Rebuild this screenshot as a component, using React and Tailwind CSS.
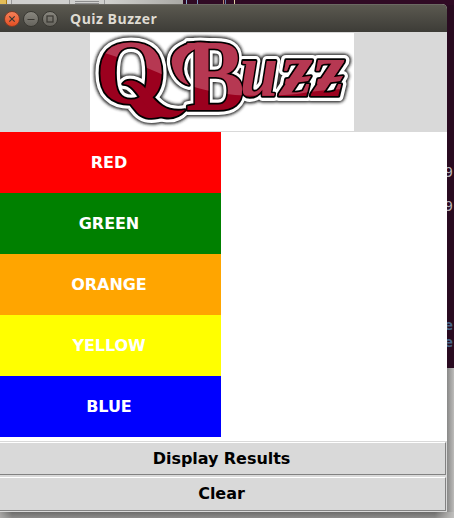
import React from "react";

const teams = [
  ["RED", "bg-[#ff0000]"],
  ["GREEN", "bg-[#008000]"],
  ["ORANGE", "bg-[#ffa500]"],
  ["YELLOW", "bg-[#ffff00]"],
  ["BLUE", "bg-[#0000ff]"],
];

const letters = [
  ["Q", "translate(6 70) scale(1 1)", 90, "normal"],
  ["B", "translate(96 77) scale(.86 1)", 102, "normal"],
  ["u", "translate(150 63) scale(.9 1)", 76, "italic"],
  ["z", "translate(191 63) scale(1.04 1)", 78, "italic"],
  ["z", "translate(223 63) scale(1.04 1)", 78, "italic"],
];

function Lettering(props) {
  return (
    <g fontFamily="'Liberation Serif', serif" fontWeight="bold" strokeLinejoin="round" {...props}>
      {letters.map(([char, transform, size, style], i) => (
        <text key={i} transform={transform} fontSize={size} fontStyle={style}>{char}</text>
      ))}
      {/* Calligraphic flourishes around the capitals and across the z pair */}
      <path d="M119 10C97 7 80 16 82 31C84 43 91 50 99 52C93 45 91 38 93 30C95 20 104 14 119 13Z" />
      <path d="M33 51C37 45 48 47 55 55C64 66 73 81 95 77C84 89 66 86 56 73C47 60 42 51 33 51Z" />
      <path d="M196 46L221 43L218 48L195 51ZM228 46L253 43L250 48L227 51Z" />
    </g>
  );
}

function Logo() {
  return (
    <svg width="264" height="98" viewBox="0 0 264 98" className="block bg-white">
      <defs>
        <filter id="halo" x="-10%" y="-10%" width="120%" height="120%">
          <feGaussianBlur stdDeviation="1.6" />
        </filter>
        <clipPath id="gloss">
          <path d="M0 0H264V56Q235 56 207 61Q180 64 145 62Q105 58 69 40Q35 25 0 16Z" />
        </clipPath>
      </defs>
      <Lettering fill="#222" stroke="#222" strokeWidth="13" filter="url(#halo)" />
      <Lettering fill="#fff" stroke="#fff" strokeWidth="10" />
      <Lettering fill="#000" stroke="#000" strokeWidth="3.6" />
      <Lettering fill="#9b001e" />
      <g clipPath="url(#gloss)"><Lettering fill="#b63852" /></g>
    </svg>
  );
}

function WindowButton({ kind }) {
  const close = kind === "close";
  return (
    <span className={`flex size-[16px] items-center justify-center rounded-full border ${close ? "border-[#7b3d29] bg-linear-to-b from-[#f58057] to-[#e44e20]" : "border-[#393832] bg-linear-to-b from-[#89877f] to-[#66645d]"}`}>
      <svg width="14" height="14" viewBox="0 0 14 14" className="shrink-0" fill="none" stroke="#3a3832" strokeWidth="1.2">
        {close && <path d="M4.3 4.3l5.4 5.4M9.7 4.3L4.3 9.7" />}
        {kind === "minimize" && <path d="M3.5 7.5h7" />}
        {kind === "maximize" && <rect x="4" y="4" width="6" height="6" />}
      </svg>
    </span>
  );
}

function ActionButton({ children, height }) {
  return (
    <button className={`mr-px flex w-[446px] items-center justify-center border-t border-r border-b border-t-white border-r-[#828282] border-b-[#828282] bg-[#d9d9d9] pr-[2px] font-['DejaVu_Sans',sans-serif] text-[16px] font-bold leading-none tracking-[-0.06px] text-black ${height}`}>
      {children}
    </button>
  );
}

function Desktop() {
  return (
    <div className="flex h-full flex-col bg-[#300a24]">
      <div className="flex h-[5px] shrink-0">
        <div className="h-full w-[7px] border-r border-[#a87912] bg-[#e3bd58]" />
        <div className="h-full w-[5px] border-r border-[#999] bg-[#d5d5d2]" />
        <div className="h-full w-[58px] border-r border-[#999] bg-[#d0d0ce]" />
        <div className="flex h-full w-[35px] flex-col items-center gap-px border-r border-[#999] bg-[#d0d0ce] pt-px">
          <i className="h-px w-6 bg-[#8e8e8e]" />
          <i className="h-px w-6 bg-[#8e8e8e]" />
        </div>
        <div className="h-full w-[78px] bg-linear-to-r from-[#d2d2cf] to-[#aaa9a5]" />
        <div className="flex h-full grow bg-[#300a24] pl-[3px]">
          <i className="h-full w-px bg-[#8aabd2]" />
          <i className="ml-[10px] h-full w-px bg-[#7795c1]" />
          <i className="ml-[25px] h-full w-px bg-[#b98774]" />
          <i className="ml-[1px] h-full w-px bg-[#647faa]" />
          <i className="ml-[8px] h-full w-px bg-[#ded3a2]" />
        </div>
      </div>
      <div className="flex h-[363px] shrink-0 flex-col items-end overflow-hidden bg-[#290a20] pr-px pt-[159px] font-['DejaVu_Sans_Mono',monospace] text-[14px] leading-[17px] text-[#b9b3b7]">
        <span>9</span>
        <span className="mt-[17px]">9</span>
        <span className="mt-[102px] font-bold text-[#486587]">e</span>
        <span className="font-bold text-[#486587]">e</span>
      </div>
      <div className="grow bg-[#c2c1bf]" />
    </div>
  );
}

export default function App() {
  return (
    <div className="relative h-[518px] w-[454px] overflow-hidden">
      <Desktop />
      <main className="absolute top-[4px] left-0 flex h-[508px] w-[447px] flex-col overflow-hidden rounded-tr-[5px] bg-[#d9d9d9]">
        <header className="flex h-[28px] shrink-0 items-center border-t border-[#6b6962] bg-linear-to-b from-[#5b5950] to-[#3d3c37] pl-[4px]">
          <div className="flex gap-[3px]">
            <WindowButton kind="close" />
            <WindowButton kind="minimize" />
            <WindowButton kind="maximize" />
          </div>
          <h1 className="ml-[12px] font-['Open_Sans',sans-serif] text-[14px] font-bold leading-[18px] tracking-[0.5px] text-[#dfdbd2]">Quiz Buzzer</h1>
        </header>
        <div className="flex h-[100px] shrink-0 items-center pl-[90px]"><Logo /></div>
        <section className="h-[309px] shrink-0 bg-white">
          {teams.map(([name, color]) => (
            <div key={name} className={`flex h-[61px] w-[221px] items-center justify-center pt-px pr-[3px] font-['DejaVu_Sans',sans-serif] text-[16px] font-bold leading-none tracking-[-0.06px] text-white ${color}`}>{name}</div>
          ))}
        </section>
        <div className="flex flex-col gap-[2px] pt-px">
          <ActionButton height="h-[33px]">Display Results</ActionButton>
          <ActionButton height="h-[34px]">Clear</ActionButton>
        </div>
      </main>
      <div className="absolute top-[512px] left-0 h-[6px] w-[454px] bg-linear-to-b from-[#6c6c6b] to-[#8c8b8a] mask-[linear-gradient(to_right,#0006,#000_12px,#000_435px,transparent)]" />
      <div className="absolute top-[368px] left-[447px] h-[144px] w-[7px] bg-linear-to-r from-[#898988] to-[#bdbcba]" />
    </div>
  );
}
